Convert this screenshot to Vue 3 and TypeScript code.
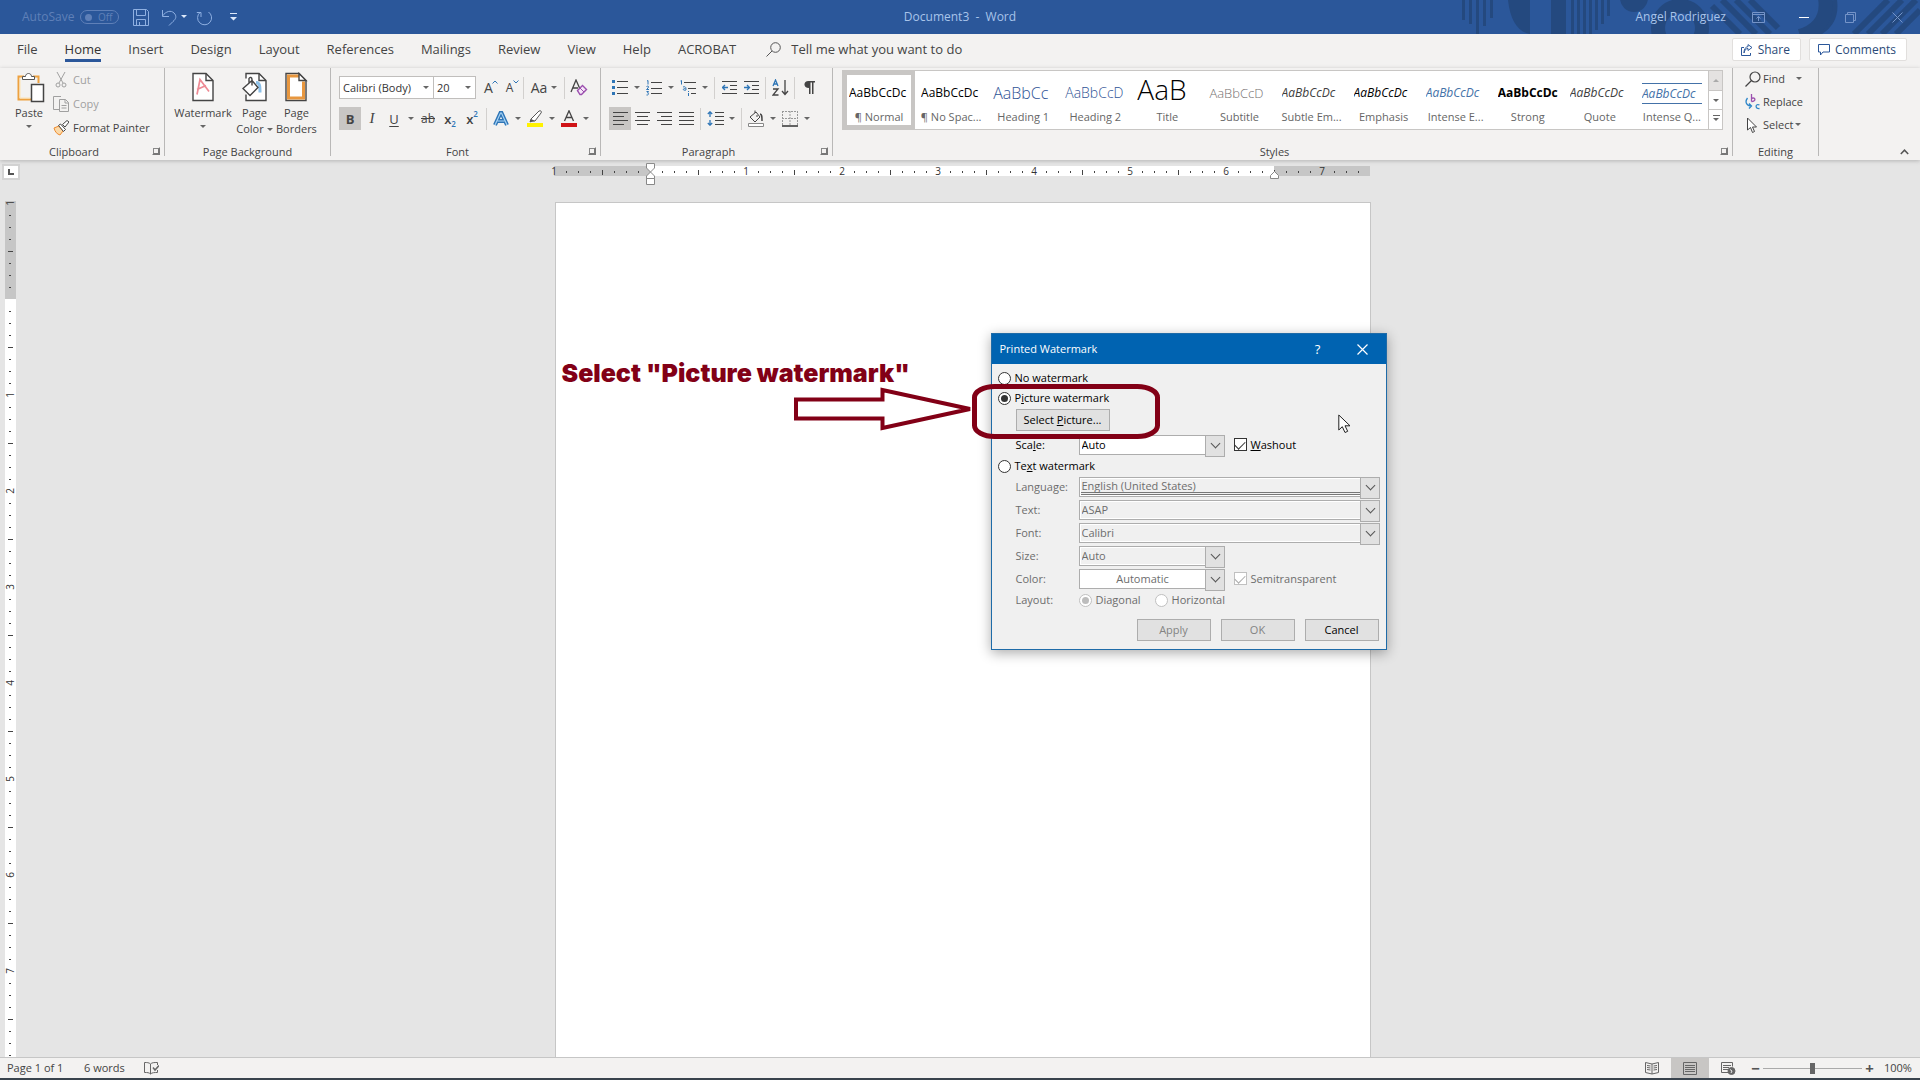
<script setup lang="ts">
import { computed, ref } from 'vue'

interface Tick { at: number; kind: 'dot' | 'half' | 'number'; label: string }
interface DocStyle { name: string; sample: string; look: string }

const tabs: string[] = ['File', 'Home', 'Insert', 'Design', 'Layout', 'References', 'Mailings', 'Review', 'View', 'Help', 'ACROBAT']
const activeTab = ref('Home')

const docStyles: DocStyle[] = [
  { name: '¶ Normal', sample: 'AaBbCcDc', look: 'plain' },
  { name: '¶ No Spac...', sample: 'AaBbCcDc', look: 'plain' },
  { name: 'Heading 1', sample: 'AaBbCc', look: 'heading1' },
  { name: 'Heading 2', sample: 'AaBbCcD', look: 'heading2' },
  { name: 'Title', sample: 'AaB', look: 'title' },
  { name: 'Subtitle', sample: 'AaBbCcD', look: 'subtitle' },
  { name: 'Subtle Em...', sample: 'AaBbCcDc', look: 'subtle' },
  { name: 'Emphasis', sample: 'AaBbCcDc', look: 'emphasis' },
  { name: 'Intense E...', sample: 'AaBbCcDc', look: 'intense' },
  { name: 'Strong', sample: 'AaBbCcDc', look: 'strong' },
  { name: 'Quote', sample: 'AaBbCcDc', look: 'subtle' },
  { name: 'Intense Q...', sample: 'AaBbCcDc', look: 'intense-quote' },
]
const activeStyle = ref('¶ Normal')

/* One tick every eighth of an inch, numbered from the margin. */
function makeTicks(length: number): Tick[] {
  const out: Tick[] = []
  for (let i = 0; i * 12 < length; i++) {
    const kind = i % 8 === 0 ? 'number' : i % 4 === 0 ? 'half' : 'dot'
    if (i === 8) continue
    out.push({ at: i * 12, kind, label: String(Math.abs(i / 8 - 1)) })
  }
  return out
}
const acrossTicks = computed(() => makeTicks(816))
const downTicks = computed(() => makeTicks(854))

const kind = ref('picture')
const washout = ref(true)
const semi = ref(true)
const orientation = ref('diagonal')
const zoom = ref(50)
</script>

<template>
  <div class="word">
    <header class="titlebar">
      <svg class="pattern" width="470" height="34" viewBox="0 0 470 34" aria-hidden="true">
        <g fill="#24497f">
          <path d="M12 0h3v20h-3zM19 0h3v24h-3zM26 0h3v34h-3zM33 0h3v26h-3zM40 0h3v18h-3zM58 0h22v34c-12-2-20-14-22-34zM101 0h15v34h-15zM121 0h3v34h-3zM127 0h3v34h-3zM133 0h3v34h-3zM139 0h3v34h-3zM145 0h3v30h-3zM151 0h3v24h-3zM157 0h3v16h-3z" />
          <circle cx="184" cy="-2" r="14" />
        </g>
        <circle cx="230" cy="28" r="22" fill="none" stroke="#24497f" stroke-width="14" />
        <path d="M272 0l34 34M286 0l34 34M300 0l28 28M262 6l28 28M366 34c16-8 20-20 18-34M404 34l34-34M418 34l34-34M432 34l34-34M446 34l24-24" fill="none" stroke="#24497f" stroke-width="6" />
        <path d="M350 36c20-6 28-20 25-38" fill="none" stroke="#24497f" stroke-width="14" />
      </svg>
      <div class="quick">
        <label class="autosave">AutoSave <span class="toggle"><input type="checkbox" disabled />Off</span></label>
        <button class="q save" aria-label="Save">
          <svg width="16" height="17" viewBox="0 0 16 17"><path d="M.5.5h13l2 2v14H.5zM3.5.5v6h9v-6M3.5 16.500v-6h9v6M6.500 13v3" /></svg>
        </button>
        <button class="q undo" aria-label="Undo">
          <svg width="26" height="17" viewBox="0 0 26 17"><path d="M1.500 1v6.500h6.500M1.500 7C5 2 10 1 13 4s2 6-1 8.500L8 16.500" /><path class="solid" d="M20 6h6l-3 3z" /></svg>
        </button>
        <button class="q redo" aria-label="Repeat">
          <svg width="17" height="17" viewBox="0 0 17 17"><path d="M4 3.500a7 7 0 1 0 8.500-.5M.8 3.500H5V8" /></svg>
        </button>
        <button class="q" aria-label="Customize Quick Access Toolbar">
          <svg width="7" height="8" viewBox="0 0 7 8"><path class="solid" d="M0 0h7v1H0zM0 4h7l-3.500 3.500z" /></svg>
        </button>
      </div>
      <h1 class="doc-name">Document3&nbsp; -&nbsp; Word</h1>
      <div class="account">
        <span>Angel Rodriguez</span>
        <button class="q w1" aria-label="Ribbon Display Options"><svg width="13" height="11" viewBox="0 0 13 11"><path d="M.5.500h12v10H.5zM.5 2.500h12M6.500 9V4.500M4.500 6.500l2-2 2 2" /></svg></button>
        <button class="q w2 bright" aria-label="Minimize"><svg width="10" height="11" viewBox="0 0 10 11"><path d="M0 5.500h10" /></svg></button>
        <button class="q w2" aria-label="Restore Down"><svg width="11" height="11" viewBox="0 0 11 11"><path d="M.5 2.500h8v8h-8zM2.500 2.500v-2h8v8h-2" /></svg></button>
        <button class="q w2" aria-label="Close"><svg width="11" height="11" viewBox="0 0 11 11"><path d="M.5.500l10 10M10.500.500l-10 10" /></svg></button>
      </div>
    </header>

    <nav class="tabs">
      <button v-for="t in tabs" :key="t" class="tab" :class="{ active: t === activeTab }" @click="activeTab = t">{{ t }}</button>
      <button class="tab tell">
        <svg width="15" height="15" viewBox="0 0 15 15" fill="none" stroke="#555"><circle cx="9.500" cy="5.500" r="4.800" /><path d="M6 9L.5 14.500" /></svg>
        Tell me what you want to do
      </button>
      <span class="grow"></span>
      <button class="pill"><svg width="12" height="12" viewBox="0 0 12 12" fill="none" stroke="#2b579a"><path d="M3 3.500H.5v8h9V9M3 9c.5-3 2-4.500 4-4.500v2L11 3.500 7 .6v2C4.500 3 3 5 3 9z" /></svg>Share</button>
      <button class="pill"><svg width="12" height="12" viewBox="0 0 12 12" fill="none" stroke="#2b579a"><path d="M.5.500h11v7.500H5L2.500 11V8h-2z" /></svg>Comments</button>
    </nav>

    <section class="ribbon">
      <div class="group clipboard">
        <div class="body">
          <button class="big paste">
            <svg width="28" height="31" viewBox="0 0 28 31" fill="none"><path d="M7 4.500H1.500v23H14M16 4.500h5.500V11" stroke="#eda140" stroke-width="2" /><path d="M3 6v20h10" stroke="#fde3b4" /><path d="M5.500 7.500V4.500h3c0-4 6-4 6 0h3v3z" stroke="#555" fill="#fff" /><path d="M14.500 12.500h12v17h-12z" stroke="#444" stroke-width="1.500" fill="#fff" /></svg>
            <span>Paste</span><i class="caret"></i>
          </button>
          <div class="stack">
            <button class="line off"><svg width="16" height="16" viewBox="0 0 16 16" fill="none" stroke="#a0a0a0"><path d="M4 0l6 11M12 0L6 11" /><circle cx="5" cy="13" r="2" /><circle cx="11" cy="13" r="2" /></svg>Cut</button>
            <button class="line off"><svg width="16" height="16" viewBox="0 0 16 16" fill="none" stroke="#a0a0a0"><path d="M6 13.500H.5V.500H8M6.500 3.500h6l3 3v9h-9zM12 3.500V7h3.500M8.500 9.500h5M8.500 12h5" /></svg>Copy</button>
            <button class="line"><svg width="16" height="16" viewBox="0 0 16 16"><path d="M1 8l5-2 4 5-3 4c-3-1-5-3-6-7z" fill="#fbd9a8" stroke="#ee8b2e" /><path d="M5.500 5.500l2-1.500 5 5.500-2 2zM9.500 4.500L14 .5 16 2l-4 5z" fill="#fff" stroke="#444" /></svg>Format Painter</button>
          </div>
        </div>
        <footer>Clipboard<button class="launch" aria-label="Clipboard options"></button></footer>
      </div>

      <div class="group pagebg">
        <div class="body">
          <button class="big mark">
            <svg width="23" height="30" viewBox="0 0 23 30" fill="none"><path d="M1 1h13l7 7v20H1z" stroke="#444" stroke-width="1.400" fill="#fff" /><path d="M14 1v7h7" stroke="#444" stroke-width="1.400" /><path d="M5 22L8 7l9 12M5 17l9-4" stroke="#ee8a94" stroke-width="1.700" /></svg>
            <span>Watermark</span><i class="caret"></i>
          </button>
          <button class="big">
            <svg width="26" height="30" viewBox="0 0 26 30" fill="none"><path d="M4 6V1h13l7 7v20H4v-6" stroke="#444" stroke-width="1.400" fill="#fff" /><path d="M17 1v7h7" stroke="#444" stroke-width="1.400" /><path d="M14 10c4 0 4 4 4 10" stroke="#8cc0e8" stroke-width="3" /><path d="M1 16l9-8 6 7-8 8zM7 11V6c1-2 3-1 3 1v6" stroke="#444" stroke-width="1.400" fill="#fff" /></svg>
            <span>Page</span><span class="with-caret">Color<i class="caret"></i></span>
          </button>
          <button class="big">
            <svg width="23" height="30" viewBox="0 0 23 30" fill="none"><path d="M1 1h13l7 7v20H1z" stroke="#444" stroke-width="1.400" fill="#fff" /><path d="M14 3.500H3.500v22h15V9" stroke="#e8973f" stroke-width="3" /><path d="M14 1v7h7z" stroke="#444" stroke-width="1.400" fill="#fff" /></svg>
            <span>Page</span><span>Borders</span>
          </button>
        </div>
        <footer>Page Background</footer>
      </div>

      <div class="group font">
        <div class="body rows">
          <div class="row">
            <span class="combo name"><select aria-label="Font"><option>Calibri (Body)</option></select></span>
            <span class="combo size"><select aria-label="Font size"><option>20</option></select></span>
            <button class="ib narrow first" aria-label="Increase font size"><span class="letter">A</span><svg class="up" width="6" height="4" viewBox="0 0 6 4"><path d="M.5 3.500L3 1l2.500 2.500" /></svg></button>
            <button class="ib narrow" aria-label="Decrease font size"><span class="letter small">A</span><svg class="up" width="6" height="4" viewBox="0 0 6 4"><path d="M.5.500L3 3 5.500.500" /></svg></button>
            <i class="sep"></i>
            <button class="ib case"><span class="letter">Aa</span><i class="caret"></i></button>
            <i class="sep"></i>
            <button class="ib" aria-label="Clear all formatting"><svg width="18" height="17" viewBox="0 0 18 17" fill="none"><path d="M1 13L6 1l4 9M3 9h5" stroke="#444" stroke-width="1.300" /><path d="M7.500 11.500l5-5 4 4-5 5H10z" stroke="#9b4fae" stroke-width="1.400" fill="#f6e6f8" /><path d="M10 9l4 4" stroke="#9b4fae" /></svg></button>
          </div>
          <div class="row">
            <button class="ib on bold">B</button>
            <button class="ib italic">I</button>
            <button class="ib under">U</button><button class="drop" aria-label="Underline style"><i class="caret"></i></button>
            <button class="ib strike">ab</button>
            <button class="ib script">x<sub>2</sub></button>
            <button class="ib script">x<sup>2</sup></button>
            <i class="sep"></i>
            <button class="ib" aria-label="Text effects"><svg width="16" height="16" viewBox="0 0 16 16" fill="none"><path d="M2 14L7.500 2h1L14 14M4.500 10h7" stroke="#2e75b6" stroke-width="4" /><path d="M2 14L7.500 2h1L14 14M4.500 10h7" stroke="#a7d3f5" stroke-width="1.200" /></svg></button><button class="drop" aria-label="Text effect list"><i class="caret"></i></button>
            <button class="ib" aria-label="Highlight color"><svg width="16" height="17" viewBox="0 0 16 17"><path d="M0 13h16v4H0z" fill="#fff200" /><path d="M4 9l8-8c2-1 3 1 2 2L8 11H5l-2 1z" fill="#fff" stroke="#555" /><path d="M4 9l4 2-5 1z" fill="#555" /></svg></button><button class="drop" aria-label="Highlight list"><i class="caret"></i></button>
            <button class="ib" aria-label="Font color"><svg width="16" height="17" viewBox="0 0 16 17"><path d="M0 13h16v4H0z" fill="#d01317" /><path d="M3.500 11L8 .8 12.500 11M5 7.500h6" fill="none" stroke="#444" stroke-width="1.300" /></svg></button><button class="drop" aria-label="Font color list"><i class="caret"></i></button>
          </div>
        </div>
        <footer>Font<button class="launch" aria-label="Font options"></button></footer>
      </div>

      <div class="group para">
        <div class="body rows">
          <div class="row">
            <button class="ib" aria-label="Bullets"><svg width="16" height="16" viewBox="0 0 16 16"><path d="M0 0h3v3H0zM0 6h3v3H0zM0 12h3v3H0z" fill="#2e75b6" /><path d="M5 1.500h11M5 7.500h11M5 13.500h11" stroke="#444" /></svg></button><button class="drop" aria-label="Bullet list"><i class="caret"></i></button>
            <button class="ib" aria-label="Numbering"><svg width="16" height="16" viewBox="0 0 16 16" fill="none"><path d="M1 1l1-.5v4M.5 6.500c2-1 2.500 0 1.500 1.500L.5 9.500h2.500M.5 11.500h2l-1 1.500c2 0 1 2.500-1 2" stroke="#2e75b6" /><path d="M5 2.500h11M5 8.500h11M5 13.500h11" stroke="#444" /></svg></button><button class="drop" aria-label="Number list"><i class="caret"></i></button>
            <button class="ib" aria-label="Multilevel list"><svg width="16" height="16" viewBox="0 0 16 16" fill="none"><path d="M.5 1l1-.5v4M3 7c3-1 3 1 3 3-3 1-4-1.500-.5-1.500M8.500 11v1M8.500 13v3" stroke="#2e75b6" /><path d="M4 2.500h12M8 8.500h8M11 13.500h5" stroke="#444" /></svg></button><button class="drop" aria-label="Level list"><i class="caret"></i></button>
            <i class="sep"></i>
            <button class="ib" aria-label="Decrease indent"><svg width="15" height="13" viewBox="0 0 15 13" fill="none"><path d="M0 .500h15M8 4.500h7M8 8.500h7M0 12.500h15" stroke="#444" /><path d="M6 6.500H.5M3 4L.5 6.500 3 9" stroke="#2e75b6" stroke-width="1.300" /></svg></button>
            <button class="ib" aria-label="Increase indent"><svg width="15" height="13" viewBox="0 0 15 13" fill="none"><path d="M0 .500h15M8 4.500h7M8 8.500h7M0 12.500h15" stroke="#444" /><path d="M0 6.500h5.500M3 4l2.500 2.500L3 9" stroke="#2e75b6" stroke-width="1.300" /></svg></button>
            <i class="sep"></i>
            <button class="ib" aria-label="Sort"><svg width="17" height="17" viewBox="0 0 17 17" fill="none"><path d="M1 7l2.500-6L6 7M2 5h3" stroke="#2e75b6" stroke-width="1.300" /><path d="M1 10h5l-5 6h5.500" stroke="#444" stroke-width="1.300" /><path d="M13 1v14.500M10 12l3 3.500 3-3.500" stroke="#444" stroke-width="1.300" /></svg></button>
            <i class="sep"></i>
            <button class="ib" aria-label="Show paragraph marks"><svg width="11" height="13" viewBox="0 0 11 13"><path d="M4.500 0H11v1.500H9.500V13H8V1.500H6.500V13H5V7C-1 7-1 0 4.500 0z" fill="#444" /></svg></button>
          </div>
          <div class="row">
            <button class="ib on" aria-label="Align left"><svg width="15" height="14" viewBox="0 0 15 14" stroke="#444"><path d="M0 .500h15M0 4.500h11M0 8.500h15M0 12.500h11" /></svg></button>
            <button class="ib" aria-label="Center"><svg width="15" height="14" viewBox="0 0 15 14" stroke="#444"><path d="M0 .500h15M2 4.500h11M0 8.500h15M2 12.500h11" /></svg></button>
            <button class="ib" aria-label="Align right"><svg width="15" height="14" viewBox="0 0 15 14" stroke="#444"><path d="M0 .500h15M4 4.500h11M0 8.500h15M4 12.500h11" /></svg></button>
            <button class="ib" aria-label="Justify"><svg width="15" height="14" viewBox="0 0 15 14" stroke="#444"><path d="M0 .500h15M0 4.500h15M0 8.500h15M0 12.500h15" /></svg></button>
            <i class="sep"></i>
            <button class="ib" aria-label="Line spacing"><svg width="17" height="15" viewBox="0 0 17 15" fill="none"><path d="M3 1v5M.8 3L3 .8 5.200 3M3 14V9M.8 12L3 14.200 5.200 12" stroke="#2e75b6" stroke-width="1.300" /><path d="M8 1.500h9M8 5.500h9M8 9.500h9M8 13.500h9" stroke="#444" /></svg></button><button class="drop" aria-label="Spacing list"><i class="caret"></i></button>
            <i class="sep"></i>
            <button class="ib" aria-label="Shading"><svg width="16" height="17" viewBox="0 0 16 17" fill="none"><path d="M.5 13.500h15v3H.5z" stroke="#888" fill="#fff" /><path d="M2 7l6-5 4 5-5 5zM7 3V.5M9 5v2" stroke="#444" /><path d="M12 4c2 0 2 3 2 7" stroke="#444" stroke-width="1.500" /></svg></button><button class="drop" aria-label="Shading list"><i class="caret"></i></button>
            <button class="ib" aria-label="Borders"><svg width="16" height="16" viewBox="0 0 16 16" fill="none"><path d="M.5 0v14M15.500 0v14M8 0v14M0 .500h16M0 7.500h16" stroke="#999" stroke-dasharray="2 1" /><path d="M0 15h16" stroke="#333" stroke-width="1.500" /></svg></button><button class="drop" aria-label="Border list"><i class="caret"></i></button>
          </div>
        </div>
        <footer>Paragraph<button class="launch" aria-label="Paragraph options"></button></footer>
      </div>

      <div class="group styles">
        <div class="body">
          <div class="gallery">
            <div class="cells">
              <button v-for="s in docStyles" :key="s.name" class="cell" :class="{ chosen: s.name === activeStyle }" @click="activeStyle = s.name">
                <span class="sample" :class="s.look">{{ s.sample }}</span>
                <span class="cell-name">{{ s.name }}</span>
              </button>
            </div>
            <div class="scroller">
              <button class="faded" aria-label="Previous row"><i class="caret flip"></i></button>
              <button aria-label="Next row"><i class="caret"></i></button>
              <button aria-label="More styles"><i class="caret lined"></i></button>
            </div>
          </div>
        </div>
        <footer>Styles<button class="launch" aria-label="Styles options"></button></footer>
      </div>

      <div class="group editing">
        <div class="body">
          <div class="stack tight">
            <button class="line"><svg width="16" height="16" viewBox="0 0 16 16" fill="none" stroke="#444" stroke-width="1.200"><circle cx="10" cy="6" r="5" /><path d="M6.500 9.500L.5 15.500" /></svg>Find <i class="caret far"></i></button>
            <button class="line"><svg width="16" height="16" viewBox="0 0 16 16" fill="none"><path d="M6.500 0v7.500M6.500 4.500c4-2 5 3 0 3" stroke="#9b4fae" stroke-width="1.300" /><path d="M14.500 11c-4-2-5 4 0 3.500M2.500 4c-3 4-1 8 4 8M4 9.500L6.500 12 4 14.500" stroke="#2e86c9" stroke-width="1.300" /></svg>Replace</button>
            <button class="line"><svg width="16" height="16" viewBox="0 0 16 16" fill="#fff" stroke="#444"><path d="M2.500 1v12l3-2.500 2 5 2-1-2-4.500h4z" /></svg>Select<i class="caret"></i></button>
          </div>
        </div>
        <footer>Editing</footer>
      </div>
      <button class="collapse" aria-label="Collapse the ribbon"><svg width="9" height="6" viewBox="0 0 9 6" fill="none" stroke="#555" stroke-width="1.500"><path d="M.8 5L4.500 1.200 8.200 5" /></svg></button>
    </section>

    <main class="workspace">
      <div class="side">
        <button class="tabstop" aria-label="Left tab"><svg width="6" height="6" viewBox="0 0 6 6"><path d="M1 0v5h5" fill="none" stroke="#555" stroke-width="2" /></svg></button>
        <svg class="ruler down" width="11" height="854" viewBox="0 0 11 854">
          <path d="M0-2h11v98H0z" fill="#c6c6c6" />
          <template v-for="t in downTicks" :key="t.at">
            <text v-if="t.kind === 'number'" x="0" y="0" :transform="`translate(9 ${t.at}) rotate(-90)`" text-anchor="middle">{{ t.label }}</text>
            <path v-else-if="t.kind === 'half'" :d="`M3 ${t.at + 0.5}h5`" stroke="#444" />
            <path v-else :d="`M4 ${t.at + 0.5}h2`" stroke="#444" />
          </template>
        </svg>
      </div>
      <div class="canvas">
        <svg class="ruler across" width="816" height="19" viewBox="0 0 816 19">
          <path d="M0 0h816v10H0z" fill="#fff" /><path d="M0 0h96v10H0zM720 0h96v10h-96z" fill="#c6c6c6" />
          <template v-for="t in acrossTicks" :key="t.at">
            <text v-if="t.kind === 'number'" :x="t.at" y="9" text-anchor="middle">{{ t.label }}</text>
            <path v-else-if="t.kind === 'half'" :d="`M${t.at + 0.5} 4v5`" stroke="#444" />
            <path v-else :d="`M${t.at + 0.5} 5v2`" stroke="#444" />
          </template>
          <g fill="#fff" stroke="#888"><path d="M92.500-2.500h8V2l-4 4-4-4zM92.500 12.500V10l4-4 4 4v2.500zM92.500 12.500h8v6h-8zM716.500 12.500V9.500l4-4 4 4v3z" /></g>
        </svg>
        <article class="page">
          <h2 class="callout">Select "Picture watermark"</h2>
          <section class="dialog" role="dialog" aria-label="Printed Watermark">
            <header class="dlg-title">
              <span>Printed Watermark</span>
              <button aria-label="Help">?</button>
              <button aria-label="Close dialog"><svg width="11" height="11" viewBox="0 0 11 11" stroke="#fff" stroke-width="1.200"><path d="M.5.500l10 10M10.500.500l-10 10" /></svg></button>
            </header>
            <form class="dlg-body" @submit.prevent>
              <label class="choice tall"><input v-model="kind" type="radio" name="kind" value="none" /><span>No watermark</span></label>
              <label class="choice tall"><input v-model="kind" type="radio" name="kind" value="picture" /><span>P<u>i</u>cture watermark</span></label>
              <div class="field pick"><button class="btn" type="button">Select <u>P</u>icture...</button></div>
              <div class="field scale">
                <label for="scale">Sca<u>l</u>e:</label>
                <span class="drop-box short"><select id="scale"><option>Auto</option></select></span>
                <label class="choice beside"><input v-model="washout" type="checkbox" /><span><u>W</u>ashout</span></label>
              </div>
              <label class="choice"><input v-model="kind" type="radio" name="kind" value="text" /><span>Te<u>x</u>t watermark</span></label>
              <div class="field dim"><label for="language">Language:</label><span class="drop-box lang"><select id="language" disabled><option>English (United States)</option></select></span></div>
              <div class="field dim"><label for="wtext">Text:</label><span class="drop-box"><select id="wtext" disabled><option>ASAP</option></select></span></div>
              <div class="field dim"><label for="wfont">Font:</label><span class="drop-box"><select id="wfont" disabled><option>Calibri</option></select></span></div>
              <div class="field dim"><label for="wsize">Size:</label><span class="drop-box short"><select id="wsize" disabled><option>Auto</option></select></span></div>
              <div class="field dim">
                <label for="wcolor">Color:</label>
                <span class="drop-box short white"><select id="wcolor" disabled><option>Automatic</option></select></span>
                <label class="choice beside"><input v-model="semi" type="checkbox" disabled /><span>Semitransparent</span></label>
              </div>
              <div class="field dim layout" role="group" aria-label="Layout">
                <span class="lead">Layout:</span>
                <label class="choice"><input v-model="orientation" type="radio" name="orientation" value="diagonal" disabled /><span>Diagonal</span></label>
                <label class="choice"><input v-model="orientation" type="radio" name="orientation" value="horizontal" disabled /><span>Horizontal</span></label>
              </div>
              <div class="actions">
                <button class="btn" type="button" disabled>Apply</button>
                <button class="btn" type="button" disabled>OK</button>
                <button class="btn" type="button">Cancel</button>
              </div>
            </form>
          </section>
          <svg class="ink" width="370" height="62" viewBox="0 0 370 62" fill="none" stroke="#820016" aria-hidden="true">
            <path d="M4 19.500h86.500V10L178 29l-87.500 19v-9.500H4z" stroke-width="4" />
            <rect x="182.500" y="6.500" width="183" height="50" rx="20" ry="11" stroke-width="5" />
          </svg>
          <svg class="pointer" width="13" height="20" viewBox="0 0 13 20"><path d="M.8 1v15l3.500-3.300L7 18.500l2.700-1.200L7 11.800h5z" fill="#fff" stroke="#222" /></svg>
        </article>
      </div>
    </main>

    <footer class="status">
      <span class="pages">Page 1 of 1</span>
      <span class="words">6 words</span>
      <svg width="15" height="13" viewBox="0 0 15 13" fill="none" stroke="#666"><path d="M6.500 2C5 .5 3 .5.500.500v10c3 0 4.500 0 6 1.500V2C8 .5 10 .5 13.500.500V3M6.500 12c1.500-1.500 4-1.500 7-1.500V8" /><path d="M9 5.500l2 2.500 4-4.500" stroke-width="1.500" /></svg>
      <span class="grow"></span>
      <button class="view" aria-label="Read Mode"><svg width="14" height="13" viewBox="0 0 14 13" fill="none" stroke="#666"><path d="M7 2L.5.500v10L7 12l6.500-1.500V.500zM7 2v10M2 3.500l3.500.5M2 5.500l3.500.5M2 7.500l3.500.5M12 3.500L8.500 4M12 5.500L8.500 6M12 7.500L8.500 8" /></svg></button>
      <button class="view on" aria-label="Print Layout"><svg width="14" height="13" viewBox="0 0 14 13" fill="none" stroke="#666"><path d="M.5.500h13v12H.5zM2 3.500h10M2 5.500h10M2 7.500h10M2 9.500h10" /></svg></button>
      <button class="view" aria-label="Web Layout"><svg width="15" height="13" viewBox="0 0 15 13" fill="none" stroke="#666"><path d="M7 10.500H.5V.500h11v4M2 3.500h8M2 5.500h6M2 7.500h5" /><circle cx="10.500" cy="9" r="3.500" fill="#666" /><path d="M9 7.500l2 1.500-1 2" stroke="#eee" /></svg></button>
      <div class="zoomer">
        <button aria-label="Zoom out">&minus;</button>
        <input v-model="zoom" type="range" min="0" max="100" aria-label="Zoom" />
        <button aria-label="Zoom in">+</button>
      </div>
      <span class="percent">100%</span>
    </footer>
  </div>
</template>

<style>
body { margin: 0; background: #e5e5e5; }
</style>

<style scoped>
* { box-sizing: border-box; }
.word { min-height: 100vh; display: flex; flex-direction: column; font: 11px/16px "Open Sans", "Noto Sans", sans-serif; color: #444; background: #e5e5e5; border-bottom: 2px solid #39434d; }
button { font: inherit; color: inherit; background: none; border: 0; padding: 0; margin: 0; }
select, input { font: inherit; margin: 0; }
svg { display: block; flex: none; }
.grow { flex: 1; }

.titlebar { position: relative; display: grid; grid-template-columns: 1fr auto 1fr; align-items: center; height: 34px; background: #2b579a; color: #a9c4ea; overflow: hidden; font-size: 12px; }
.pattern { position: absolute; right: 0; top: 0; }
.quick { display: flex; align-items: center; padding-left: 22px; }
.autosave { display: flex; align-items: center; gap: 6px; margin-right: 14px; color: #5f80b8; }
.toggle { display: flex; align-items: center; justify-content: space-between; width: 39px; height: 14px; padding: 0 6px 0 4px; border: 1px solid #5f80b8; border-radius: 7px; font-size: 10px; line-height: 12px; }
.toggle input { appearance: none; width: 7px; height: 7px; border-radius: 50%; background: #5f80b8; }
.q svg { fill: none; stroke: #8fb0e2; }
.q .solid { fill: #dce8fa; stroke: none; }
.save { margin-right: 12px; }
.undo { margin-right: 9px; }
.redo { margin-right: 17px; }
.doc-name { margin: 0; font-size: 12px; line-height: 16px; font-weight: 400; padding-bottom: 1px; }
.account { position: relative; display: flex; align-items: center; justify-content: flex-end; padding-right: 17px; }
.account .q svg { stroke: #7594c8; margin: auto; }
.account .bright svg { stroke: #fff; }
.w1 { width: 46px; margin-left: 9px; }
.w2 { width: 46px; }
.w2:last-child { width: 12px; margin-left: 18px; }

.tabs { display: flex; align-items: center; height: 34px; padding: 0 13px 0 17px; gap: 27px; background: #f3f2f1; font-size: 13px; }
.tab { height: 22px; line-height: 19px; border-bottom: 3px solid transparent; white-space: nowrap; }
.tab.active { border-color: #2b579a; color: #333; }
.tell { display: flex; align-items: center; gap: 10px; margin-left: 3px; }
.pill { display: flex; align-items: center; gap: 5px; height: 23px; padding: 0 10px 0 8px; background: #fff; border: 1px solid #e1dfdd; border-radius: 2px; color: #2b4a78; margin-top: -3px; font-size: 12px; }
.pill + .pill { margin-left: -19px; }

.ribbon { display: flex; height: 92px; background: #f3f2f1; position: relative; z-index: 1; box-shadow: 0 1px 4px #b4b4b4; }
.group { position: relative; display: flex; flex-direction: column; padding-left: 8px; }
.group::after { content: ""; position: absolute; right: 0; top: 0; width: 1px; height: 88px; background: #b9b8b7; }
.group .body { height: 75px; display: flex; }
.group footer { position: relative; text-align: center; line-height: 17px; padding-right: 25px; }
.group.pagebg footer, .group.editing footer { padding-right: 9px; }
.clipboard { width: 165px; }
.pagebg { width: 166px; }
.font { width: 270px; }
.para { width: 232px; }
.styles { flex: 1; }
.editing { width: 86px; margin-right: 101px; }
.launch { position: absolute; right: 5px; top: 5px; width: 7px; height: 7px; border: 1px solid #888; border-right-color: transparent; border-bottom-color: transparent; }
.launch::after { content: ""; position: absolute; right: -1px; bottom: -1px; width: 4px; height: 4px; border: 2px solid #777; border-left-color: transparent; border-top-color: transparent; }
.caret { display: inline-block; width: 0; height: 0; border: 3px solid transparent; border-top-color: #666; border-bottom: 0; }
.caret.flip { transform: rotate(180deg); border-top-color: #aaa; }
.caret.lined { position: relative; }
.caret.lined::before { content: ""; position: absolute; left: -3px; top: -6px; width: 7px; height: 1px; background: #666; }
.big { display: flex; flex-direction: column; align-items: center; padding-top: 4px; min-width: 37px; }
.big svg { height: 31px; margin-bottom: 2px; }
.big .caret { margin-top: 4px; }
.with-caret { display: flex; align-items: center; gap: 3px; }
.with-caret .caret { margin: 0; }
.paste { width: 42px; }
.paste svg { margin-left: 4px; }
.mark { width: 60px; }
.pagebg .body { gap: 3px; }
.stack { display: flex; flex-direction: column; }
.line { display: flex; align-items: center; gap: 4px; height: 24px; white-space: nowrap; padding-left: 3px; }
.line.off { color: #a0a0a0; }
.stack.tight .line { height: 23px; gap: 2px; }
.stack.tight { margin: -1px 0 0 1px; }
.line .caret.far { margin-left: 9px; }

.rows { flex-direction: column; padding-top: 8px; gap: 8px; }
.row { display: flex; align-items: center; height: 23px; }
.ib { position: relative; display: flex; align-items: center; justify-content: center; width: 22px; height: 23px; }
.ib.on { background: #c8c6c4; }
.narrow { width: 21px; }
.first { margin-left: 2px; }
.case { width: 34px; gap: 4px; }
.drop { width: 12px; height: 23px; display: flex; align-items: center; justify-content: center; }
.sep { width: 1px; height: 22px; background: #d2d0ce; margin: 0 3px; }
.letter { font-size: 14px; }
.letter.small { font-size: 12px; }
.up { position: absolute; right: 1px; top: 4px; fill: none; stroke: #2e75b6; }
.bold { font-size: 13px; font-weight: 700; }
.italic { font: italic 15px "Liberation Serif", serif; }
.under { font-size: 13px; text-decoration: underline; text-underline-offset: 2px; }
.strike { font-size: 12px; text-decoration: line-through; }
.script { font-size: 13px; font-weight: 600; }
.script sub, .script sup { font-size: 8px; line-height: 8px; color: #2e75b6; }
.script sub { margin-top: 10px; }
.script sup { margin-top: -10px; }
.combo { position: relative; height: 23px; border: 1px solid #c0bebc; background: #fff; }
.combo.name { width: 95px; }
.combo.size { width: 43px; margin-left: -1px; }
.combo select { appearance: none; width: 100%; height: 21px; border: 0; background: none; padding: 0 3px; color: #333; }
.combo::after { content: ""; position: absolute; right: 4px; top: 9px; border: 3px solid transparent; border-top-color: #666; border-bottom: 0; }

.gallery { flex: 1; display: flex; height: 60px; margin: 2px 10px 0 1px; background: #fff; border: 1px solid #c8c6c4; }
.cells { flex: 1; display: flex; }
.cell { flex: 1; min-width: 0; display: flex; flex-direction: column; align-items: center; border: 4px solid transparent; }
.cell.chosen { border-color: #c8c6c4; }
.sample { width: 60px; height: 33px; line-height: 36px; overflow: hidden; white-space: nowrap; text-align: left; color: #000; font-size: 12px; }
.cell-name { line-height: 17px; color: #666; white-space: nowrap; }
.heading1 { font-size: 16px; font-weight: 300; color: #2f5496; }
.heading2 { font-size: 14px; font-weight: 300; color: #2f5496; }
.title { font-size: 28px; line-height: 28px; font-weight: 300; }
.subtitle { color: #767171; font-weight: 300; font-size: 13px; }
.subtle { font-style: italic; color: #404040; }
.emphasis { font-style: italic; }
.intense { font-style: italic; color: #4472a8; }
.strong { font-weight: 700; }
.intense-quote { font-style: italic; color: #4472a8; height: 21px; line-height: 19px; margin: 8px 0 4px; border: 1px solid #4472a8; border-width: 1px 0; }
.scroller { width: 14px; display: flex; flex-direction: column; border-left: 1px solid #c8c6c4; }
.scroller button { flex: 1; display: flex; align-items: center; justify-content: center; }
.scroller button + button { border-top: 1px solid #c8c6c4; }
.scroller .faded { background: #e4e2e1; }
.collapse { position: absolute; right: 11px; bottom: 5px; }

.workspace { flex: 1; display: flex; padding: 4px 17px 0 0; }
.side { width: 22px; display: flex; flex-direction: column; }
.tabstop { width: 18px; height: 16px; margin-left: 2px; border: 2px solid #d4d4d4; background: #fff; display: flex; align-items: center; justify-content: center; margin-bottom: 23px; }
.ruler { font-size: 10px; overflow: visible; }
.ruler text { fill: #333; }
.down { margin-left: 5px; background: #fff; }
.canvas { flex: 1; display: flex; flex-direction: column; align-items: center; }
.across { margin: 2px 2px 17px 0; }
.page { position: relative; flex: 1; width: 816px; background: #fff; border: 1px solid #c6c6c6; border-bottom: 0; }
.callout { margin: 0; padding: 154px 0 0 6px; font: 900 25px/32px Inter, "Liberation Sans", sans-serif; color: #820016; white-space: nowrap; }
.ink { position: absolute; left: 236px; top: 177px; }
.pointer { position: absolute; left: 782px; top: 211px; }

.dialog { position: absolute; left: 435px; top: 130px; width: 396px; background: #f0f0f0; border: 1px solid #1e6ba8; color: #000; box-shadow: 0 3px 12px #00000055; }
.dlg-title { display: flex; align-items: center; height: 30px; padding: 0 11px 0 8px; background: #0063b1; color: #fff; }
.dlg-title span { flex: 1; }
.dlg-title button { width: 24px; margin-left: 21px; display: flex; justify-content: center; font-size: 13px; }
.dlg-body { padding: 4px 6px 8px; }
.choice { display: flex; align-items: center; gap: 4px; height: 18px; }
.choice.tall { height: 20px; }
.choice input { appearance: none; width: 13px; height: 13px; border: 1px solid #333; background: #fff; display: grid; place-items: center; }
.choice input[type="radio"] { border-radius: 50%; }
.choice input[type="radio"]:checked::after { content: ""; width: 7px; height: 7px; border-radius: 50%; background: #333; }
.choice input[type="checkbox"]:checked::after { content: ""; width: 9px; height: 5px; margin-top: -2px; border: solid #333; border-width: 0 0 1px 1px; transform: rotate(-45deg); }
.choice input:disabled { border-color: #c0c0c0; }
.choice input[type="radio"]:disabled:checked::after { background: #bdbdbd; }
.choice input[type="checkbox"]:disabled:checked::after { border-color: #aaa; }
.choice.beside { margin-left: 9px; }
.field { display: flex; align-items: center; height: 23px; padding-left: 18px; }
.field > label:first-child, .lead { width: 63px; }
.field.pick { height: 24px; }
.field.scale { height: 25px; }
.field.dim { color: #6d6d6d; }
.layout.field { height: 20px; }
.layout .choice { margin-right: 14px; }
.drop-box { position: relative; flex: 1; height: 20px; }
.drop-box.short { flex: none; width: 146px; }
.drop-box select { appearance: none; display: block; width: 100%; height: 20px; border: 1px solid #adadad; border-radius: 0; padding: 0 20px 0 2px; background: #fff; color: #000; opacity: 1; }
.drop-box select:disabled { background: #f0f0f0; color: #6d6d6d; box-shadow: inset 0 0 0 1px #fff; }
.drop-box.white select:disabled { background: #fff; text-align: center; text-align-last: center; }
.drop-box::after { content: ""; position: absolute; right: 0; top: 0; width: 18px; height: 20px; pointer-events: none; border: 1px solid #adadad; background: #e1e1e1; }
.drop-box::before { content: ""; position: absolute; z-index: 1; right: 6px; top: 5px; width: 6px; height: 6px; pointer-events: none; border: solid #555; border-width: 0 1px 1px 0; transform: rotate(45deg); }
.drop-box.lang select:disabled { padding-bottom: 3px; background: linear-gradient(#777, #777) 1px 14px / 279px 1px no-repeat, linear-gradient(#777, #777) 1px 16px / 279px 1px no-repeat, #f0f0f0; }
.btn { width: 74px; height: 22px; background: #e1e1e1; border: 1px solid #adadad; }
.btn:disabled { color: #838383; }
.pick .btn { width: 94px; }
.actions { display: flex; justify-content: flex-end; gap: 10px; padding-top: 9px; margin-right: 1px; }

.status { display: flex; align-items: center; height: 21px; padding: 0 10px 0 7px; background: #f3f2f1; border-top: 1px solid #c6c6c6; }
.pages { width: 77px; }
.words { width: 60px; }
.view { width: 38px; height: 20px; display: flex; align-items: center; justify-content: center; }
.view.on { background: #c8c6c4; }
.zoomer { display: flex; align-items: center; margin-left: 3px; gap: 2px; }
.zoomer button { width: 11px; font-size: 15px; font-weight: 700; line-height: 18px; color: #555; }
.zoomer input { appearance: none; width: 99px; height: 11px; background: linear-gradient(#aaa, #aaa) 0 5px / 100% 1px no-repeat; }
.zoomer input::-webkit-slider-thumb { appearance: none; width: 5px; height: 11px; background: #666; }
.percent { margin-left: 9px; width: 26px; white-space: nowrap; }
</style>
